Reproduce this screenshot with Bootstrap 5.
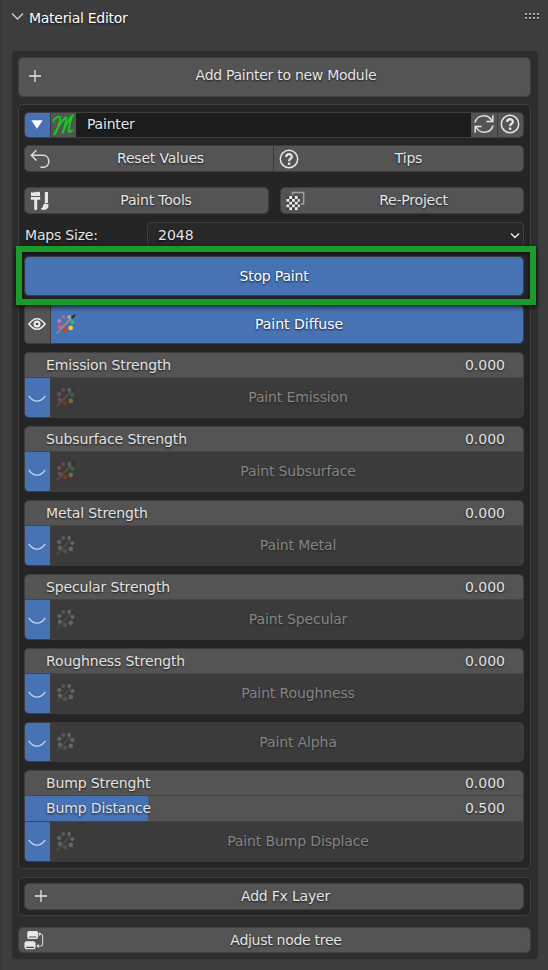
<!DOCTYPE html>
<html lang="en">
<head>
<meta charset="utf-8">
<meta name="viewport" content="width=device-width, initial-scale=1">
<title>Material Editor</title>
<link href="https://cdn.jsdelivr.net/npm/bootstrap@5.3.0/dist/css/bootstrap.min.css" rel="stylesheet">
<style>
body{background:#3d3d3d;color:#e4e4e4;font:14px/20px "DejaVu Sans",sans-serif;letter-spacing:-.2px;text-shadow:0 1px 2px rgba(0,0,0,.75);width:548px;height:970px;overflow:hidden;border-left:1px solid #383838}
svg{display:block;flex:none;overflow:visible}
.panel-head{height:51px;padding:8px 8px 0 10px}
.panel-title{color:#fff;margin-left:5px}
.tight{letter-spacing:-.28px}
.outer{margin-left:11px;width:526px;height:909px;padding:6px 7px 0 6px;background:#2d2d2d;border-radius:4px;border-bottom:1px solid #383838}
.group{background:#252525;border:1px solid #3f3f3f;border-radius:5px;padding:7px 6px 0 5px}
.w{background:#545454;border:1px solid #3e3e3e;border-radius:5px;color:#e6e6e6;display:flex;align-items:center;height:27px;overflow:hidden}
.tall{height:40px}
.on{background:#4772b3;color:#fff}
.ic{width:26px;display:flex;justify-content:center;flex:none;align-self:stretch;align-items:center}
.lbl{flex:1;text-align:center;padding:0 3px 2px 0;white-space:nowrap}
.tall .lbl{padding-bottom:1px}
.sep{border-left:1px solid #3a3a3a}
.stack{border:1px solid #3e3e3e;border-radius:5px;overflow:hidden;margin-bottom:8px;background:#3b3b3b;letter-spacing:-.13px}
.slide{height:25px;background:#545454;display:flex;justify-content:space-between;padding:2px 18px 0 21px;border-bottom:1px solid #454545;line-height:21px}
.slide.fill{background:linear-gradient(90deg,#4772b3 123px,#545454 123px);height:26px;padding-top:1px;line-height:22px}
.num{letter-spacing:0}
.chan{height:39px;display:flex;align-items:center;color:#858585;text-shadow:0 1px 2px rgba(0,0,0,.4)}
.chan .lbl{padding:0 7px 1px 0}
.eye{width:25px;background:#4772b3;padding:3px 1px 0 0}
.pal{width:30px;padding:0 0 1px 1px}
.dim{opacity:.34}
.maps{height:26px;margin-top:8px}
.pick{width:377px;background:#282828;border:1px solid #3f3f3f;border-radius:5px;padding:0 3px 0 10px}
.hl{position:absolute;left:-8px;top:-10px;width:520px;height:59px;border:6px solid #1b9b2b;box-shadow:0 2px 5px rgba(0,0,0,.75),inset 0 2px 5px rgba(0,0,0,.6);pointer-events:none;z-index:2}
.stop{margin-top:8px;margin-bottom:8px}
</style>
<script src="https://cdn.jsdelivr.net/npm/bootstrap@5.3.0/dist/js/bootstrap.bundle.min.js"></script>
</head>
<body>
<svg width="0" height="0" class="position-absolute">
<defs>
<symbol id="plus" viewBox="0 0 14 14"><path d="M7 1v12M1 7h12" stroke="#e6e6e6" stroke-width="1.3"/></symbol>
<symbol id="help" viewBox="0 0 20 20"><circle cx="10" cy="10" r="8.7" fill="none" stroke="#e4e4e4" stroke-width="1.5"/><path d="M7.2 7.9C7.2 4.4 12.9 4.3 12.9 7.7C12.9 9.7 10.1 9.8 10.1 12.2" fill="none" stroke="#e4e4e4" stroke-width="2.2"/><rect x="8.9" y="13.6" width="2.4" height="2.3" fill="#e4e4e4"/></symbol>
<symbol id="closed" viewBox="0 0 18 8"><path d="M.8 .8C5.5 8 12.5 8 17.2 .8" fill="none" stroke="#cbd9ee" stroke-width="1.2"/></symbol>
<symbol id="color" viewBox="0 0 20 20"><circle cx="7.3" cy="3" r="2" fill="#a86592"/><circle cx="13.2" cy="3" r="2" fill="#84b2b5"/><circle cx="3.3" cy="7" r="2.1" fill="#c57b9b"/><circle cx="3.9" cy="12.8" r="2.2" fill="#ef4a85"/><circle cx="9" cy="16" r="2.3" fill="#e03a22"/><circle cx="14.8" cy="13.9" r="2.3" fill="#e8ce32"/><circle cx="16.4" cy="8" r="2.1" fill="#38b279"/><path d="M.7 19.4L14.5 5" stroke="#c19745" stroke-width="1.2"/><path d="M13.4 6.2L16 3.5" stroke="#999" stroke-width="1.6"/><path d="M15.4 4.2L19 1" stroke="#272727" stroke-width="2"/></symbol>
<symbol id="grey" viewBox="0 0 20 20"><g fill="#b5b5b5"><circle cx="7.3" cy="3" r="2" fill="#909090"/><circle cx="13.2" cy="3" r="2"/><circle cx="3.3" cy="7" r="2.1"/><circle cx="3.9" cy="12.8" r="2.2"/><circle cx="9" cy="16" r="2.3" fill="#7d7d7d"/><circle cx="14.8" cy="13.9" r="2.3"/><circle cx="16.4" cy="8" r="2.1"/></g><path d="M.7 19.4L14.5 5" stroke="#a06f3c" stroke-width="1.1"/><path d="M15 4.6L19 1" stroke="#303030" stroke-width="1.6"/></symbol>
</defs>
</svg>

<header class="panel-head d-flex align-items-start">
  <svg width="13" height="20" viewBox="0 0 13 20"><path d="M1 5.5L6.5 11L12 5.5" fill="none" stroke="#cfcfcf" stroke-width="1.3"/></svg>
  <span class="panel-title tight">Material Editor</span>
  <svg width="15" height="8" viewBox="0 0 15 8" class="ms-auto mt-1"><g shape-rendering="crispEdges"><path d="M0 2h2M4 2h2M8 2h2M12 2h2M0 6h2M4 6h2M8 6h2M12 6h2" stroke="#aaa" stroke-width="2"/><path d="M0 3.5h2M4 3.5h2M8 3.5h2M12 3.5h2M0 7.5h2M4 7.5h2M8 7.5h2M12 7.5h2" stroke="#111" stroke-width="1"/></g></svg>
</header>

<main class="outer">
  <div class="w tall"><span class="ic" style="padding:0 0 2px 5px"><svg width="14" height="14"><use href="#plus"/></svg></span><span class="lbl tight pb-1">Add Painter to new Module</span></div>

  <section class="group" style="margin-top:7px;height:765px">
    <div class="w" style="height:26px;background:#1c1c1c">
      <span class="ic on" style="width:25px;padding:0 1px 2px 0"><svg width="12" height="9" viewBox="0 0 12 9"><path d="M.3 .3H11.7L6 8.8Z" fill="#fff"/></svg></span>
      <span class="ic sep" style="background:#545454;padding:0 2px 1px 0"><svg width="22" height="22" viewBox="0 0 22 22"><g fill="none" stroke="#14cf1d" stroke-linecap="round" stroke-linejoin="round"><path d="M1.5 6Q4 3 7 2.7Q9 2.8 8 7Q6 15 2.2 20.5" stroke-width="1.7"/><path d="M3 20Q8 8 14.3 3Q14.5 8 10.6 18.7" stroke-width="1.7"/><path d="M11 18Q15 7 20.7 1.2Q18 6 16.5 17Q17 19.5 20 16.5" stroke-width="1.9"/><path d="M1.5 6Q0 9 3 8" stroke-width="1"/></g></svg></span>
      <span class="flex-fill" style="padding:0 0 2px 11px">Painter</span>
      <span class="ic" style="background:#545454;padding-bottom:2px"><svg width="20" height="20" viewBox="0 0 20 20" fill="none" stroke="#e4e4e4" stroke-width="1.5"><path d="M1 8.5A9 9 0 0 1 17.6 6.5M18.8 1.2V7.6H12.4M19 11.5A9 9 0 0 1 2.4 13.5M1.2 18.8V12.4H7.6"/></svg></span>
      <span class="ic sep" style="background:#545454;padding:0 2px 2px 0"><svg width="20" height="20"><use href="#help"/></svg></span>
    </div>
    <div class="w" style="margin-top:7px">
      <span class="ic ps-1"><svg width="20" height="20" viewBox="0 0 20 20" fill="none" stroke="#dedede" stroke-width="1.5"><path d="M6.5 1.2L1.3 6.3L6.5 11.5M1.5 6.3H13C20.7 6.3 20.7 18.3 13 18.3H10.5"/></svg></span>
      <span class="lbl" style="flex:0 0 222px">Reset Values</span>
      <span class="ic sep" style="width:29px;padding-left:2px"><svg width="20" height="20"><use href="#help"/></svg></span>
      <span class="lbl pe-2">Tips</span>
    </div>
    <div class="d-flex justify-content-between" style="margin-top:15px">
      <div class="w" style="width:245px"><span class="ic ps-1"><svg width="20" height="20" viewBox="0 0 20 20" fill="#e6e6e6"><path d="M1 1L3 1.7L4 .7L5.5 1.5L6.5.7L10 1V5H1ZM.8 6H10.2V8.8H7.2V18.3Q5.7 20 4.2 18.3V8.8H.8ZM14.8 1H18V12H14.8ZM14.5 12.6L18.5 13.3Q19 18.8 13.3 19Q11.5 19 10.8 17.7Q12.8 17.4 13 15Q13.2 13.2 14.5 12.6Z"/></svg></span><span class="lbl" style="padding-right:7px">Paint Tools</span></div>
      <div class="w" style="width:244px"><span class="ic" style="padding-left:3px"><svg width="19" height="20" viewBox="0 0 19 20"><path d="M6.5 3.7V1.5H17.7V13H14.8" fill="none" stroke="#a2a2a2" stroke-width="1.4"/><path d="M.5 5H13.5V19H.5Z" fill="#414141"/><path d="M3.3 6.5h2.8M8.9 6.5h2.8M.5 9.3h2.8M6.1 9.3h2.8M11.7 9.3h2M3.3 12.1h2.8M8.9 12.1h2.8M.5 14.9h2.8M6.1 14.9h2.8M11.7 14.9h2M3.3 17.7h2.8M8.9 17.7h2.8" stroke="#eee" stroke-width="2.8"/></svg></span><span class="lbl">Re-Project</span></div>
    </div>
    <div class="maps d-flex justify-content-between align-items-center">
      <span style="padding-left:1px">Maps Size:</span>
      <div class="pick d-flex align-items-center justify-content-between h-100"><span class="num">2048</span><svg width="10" height="7" viewBox="0 0 10 7"><path d="M1 1.5L5 5.5L9 1.5" fill="none" stroke="#eee" stroke-width="1.5"/></svg></div>
    </div>
    <div class="position-relative stop">
      <div class="w tall on"><span class="lbl pe-0">Stop Paint</span></div>
      <div class="hl"></div>
    </div>
    <div class="w tall on mb-2">
      <span class="ic" style="background:#545454;border-right:1px solid #3a3a3a;padding:0 2px 1px 0"><svg width="18" height="14" viewBox="0 0 18 14"><path d="M1 7Q9-3.5 17 7Q9 17.5 1 7Z" fill="none" stroke="#eee" stroke-width="1.6"/><circle cx="9" cy="7" r="3.5" fill="#eee"/><circle cx="9" cy="7" r="1.3" fill="#444"/></svg></span>
      <span class="ic pal" style="padding-left:0"><svg width="20" height="20"><use href="#color"/></svg></span><span class="lbl" style="letter-spacing:0;padding-right:6px">Paint Diffuse</span>
    </div>

    <div class="stack"><div class="slide"><span>Emission Strength</span><span class="num">0.000</span></div><div class="chan"><span class="ic eye"><svg width="18" height="8"><use href="#closed"/></svg></span><span class="ic pal"><svg class="dim" width="20" height="20"><use href="#color"/></svg></span><span class="lbl">Paint Emission</span></div></div>
    <div class="stack"><div class="slide"><span>Subsurface Strength</span><span class="num">0.000</span></div><div class="chan"><span class="ic eye"><svg width="18" height="8"><use href="#closed"/></svg></span><span class="ic pal"><svg class="dim" width="20" height="20"><use href="#color"/></svg></span><span class="lbl">Paint Subsurface</span></div></div>
    <div class="stack"><div class="slide"><span>Metal Strength</span><span class="num">0.000</span></div><div class="chan"><span class="ic eye"><svg width="18" height="8"><use href="#closed"/></svg></span><span class="ic pal"><svg class="dim" width="20" height="20"><use href="#grey"/></svg></span><span class="lbl">Paint Metal</span></div></div>
    <div class="stack"><div class="slide"><span>Specular Strength</span><span class="num">0.000</span></div><div class="chan"><span class="ic eye"><svg width="18" height="8"><use href="#closed"/></svg></span><span class="ic pal"><svg class="dim" width="20" height="20"><use href="#grey"/></svg></span><span class="lbl">Paint Specular</span></div></div>
    <div class="stack"><div class="slide"><span>Roughness Strength</span><span class="num">0.000</span></div><div class="chan"><span class="ic eye"><svg width="18" height="8"><use href="#closed"/></svg></span><span class="ic pal"><svg class="dim" width="20" height="20"><use href="#grey"/></svg></span><span class="lbl">Paint Roughness</span></div></div>
    <div class="stack"><div class="chan" style="height:38px"><span class="ic eye"><svg width="18" height="8"><use href="#closed"/></svg></span><span class="ic pal"><svg class="dim" width="20" height="20"><use href="#grey"/></svg></span><span class="lbl">Paint Alpha</span></div></div>
    <div class="stack mb-0"><div class="slide"><span>Bump Strenght</span><span class="num">0.000</span></div><div class="slide fill"><span>Bump Distance</span><span class="num">0.500</span></div><div class="chan"><span class="ic eye"><svg width="18" height="8"><use href="#closed"/></svg></span><span class="ic pal"><svg class="dim" width="20" height="20"><use href="#grey"/></svg></span><span class="lbl">Paint Bump Displace</span></div></div>
  </section>

  <section class="group" style="margin-top:8px;height:39px;padding-top:5px">
    <div class="w"><span class="ic" style="padding:0 0 2px 5px"><svg width="14" height="14"><use href="#plus"/></svg></span><span class="lbl">Add Fx Layer</span></div>
  </section>
  <div class="w" style="margin-top:11px;height:26px"><span class="ic ps-1"><svg width="20" height="20" viewBox="0 0 20 20"><rect x="3.2" y="1" width="11" height="8" rx="2" fill="#e8e8e8"/><path d="M5 7h7.5" stroke="#555" stroke-width="1.2"/><rect x=".5" y="11.3" width="11" height="8" rx="2" fill="#e8e8e8"/><path d="M2.3 17.3H10" stroke="#444" stroke-width="1.2"/><path d="M15 4H17Q18.6 4 18.6 6V14Q18.6 16 17 16H14" fill="none" stroke="#c8c8c8" stroke-width="1.2"/><path d="M15 2.2L17.2 4L15 6ZM14.7 14L12.3 16L14.7 18Z" fill="#e8e8e8"/></svg></span><span class="lbl tight pb-0">Adjust node tree</span></div>
</main>
</body>
</html>
